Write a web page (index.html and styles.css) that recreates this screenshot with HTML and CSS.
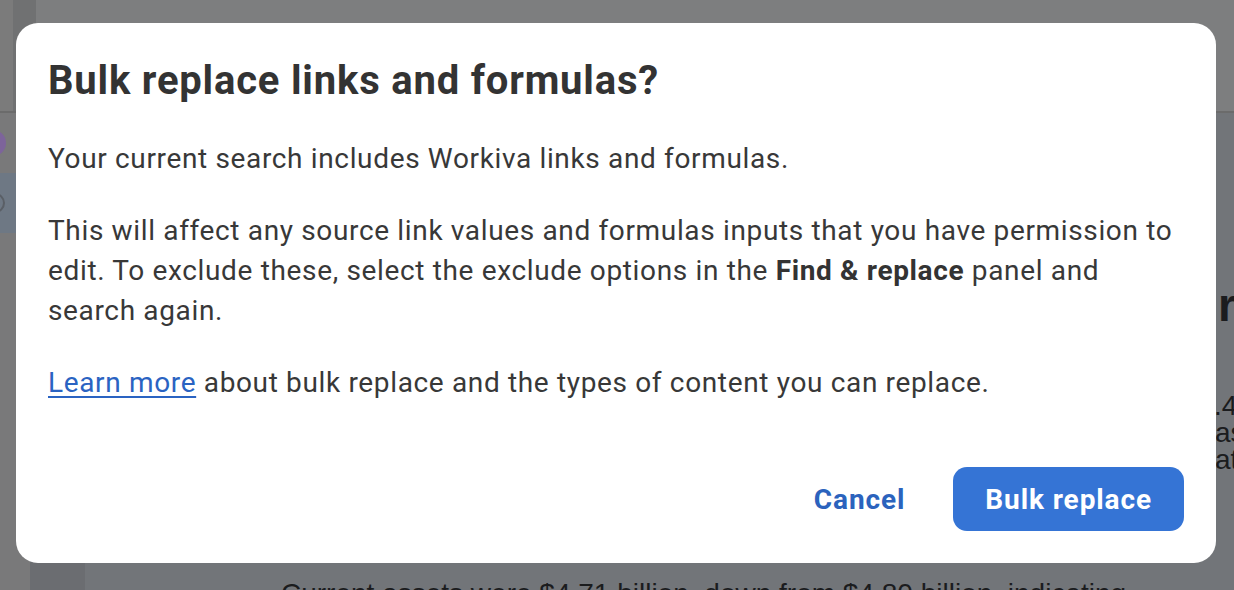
FILE: index.html
```html
<!DOCTYPE html>
<html lang="en">
<head>
<meta charset="utf-8">
<title>Bulk replace links and formulas?</title>
<link rel="stylesheet" href="styles.css">
</head>
<body>
<div class="app">
  <header class="toolbar">
    <div class="toolbar-edge"></div>
    <div class="toolbar-rail"></div>
    <div class="toolbar-main"></div>
  </header>
  <div class="workspace">
    <aside class="sidebar">
      <div class="avatar-row"><span class="avatar"></span></div>
      <div class="nav-item"><span class="ring"></span></div>
    </aside>
    <div class="panel"></div>
    <main class="canvas">
      <div class="doc">
        <h2 class="doc-row doc-heading"><span class="lead">Financial overview of quarterly</span><span class="tail">results</span></h2>
        <div class="doc-lines">
          <p class="doc-row doc-line"><span class="lead">Total revenue for the period increased to $1</span><span class="tail">.45 billion</span></p>
          <p class="doc-row doc-line"><span class="lead">driven by subscription growth and services</span><span class="tail">as customers</span></p>
          <p class="doc-row doc-line"><span class="lead">expanded usage across the platform</span><span class="tail">at scale</span></p>
        </div>
        <p class="doc-para">Current assets were $4.71 billion, down from $4.80 billion, indicating</p>
      </div>
    </main>
  </div>
</div>

<div class="overlay">
  <section class="modal" role="dialog" aria-labelledby="dlg-title">
    <h1 class="modal-title" id="dlg-title">Bulk replace links and formulas?</h1>
    <p class="modal-text">Your current search includes Workiva links and formulas.</p>
    <p class="modal-text">This will affect any source link values and formulas inputs that you have permission to edit. To exclude these, select the exclude options in the <strong>Find &amp; replace</strong> panel and search again.</p>
    <p class="modal-text"><a class="link" href="#">Learn more</a> about bulk replace and the types of content you can replace.</p>
    <div class="modal-actions">
      <button class="btn btn-text" type="button">Cancel</button>
      <button class="btn btn-primary" type="button">Bulk replace</button>
    </div>
  </section>
</div>
</body>
</html>
```
FILE: styles.css
```css
* { box-sizing: border-box; }

html, body {
  margin: 0;
  padding: 0;
  width: 1234px;
  height: 590px;
  overflow: hidden;
}

body {
  font-family: "Roboto", "Liberation Sans", sans-serif;
  background: #7e7f7f;
  position: relative;
}

/* ---------- background application (dimmed) ---------- */
.app {
  display: flex;
  flex-direction: column;
  height: 590px;
}

.toolbar {
  display: flex;
  height: 113px;
  flex: none;
  border-bottom: 2px solid #6b6b6b;
}
.toolbar-edge { width: 13px; background: #7b7b7b; }
.toolbar-rail { width: 23px; background: #707172; }
.toolbar-main { flex: 1; background: #7d7e7f; }

.workspace {
  flex: 1;
  display: flex;
  min-height: 0;
}

.sidebar {
  width: 30px;
  flex: none;
  background: #79797a;
  display: flex;
  flex-direction: column;
  padding-top: 17px;
}
.avatar-row {
  height: 26px;
  overflow: hidden;
}
.avatar {
  display: block;
  width: 26px;
  height: 26px;
  margin-left: -20px;
  border-radius: 50%;
  background: #7d649b;
}
.nav-item {
  margin-top: 17px;
  height: 60px;
  background: #6e7884;
  overflow: hidden;
  display: flex;
  align-items: center;
}
.ring {
  display: block;
  width: 20px;
  height: 20px;
  margin-left: -15px;
  border: 2px solid #5a5f66;
  border-radius: 50%;
}

.panel {
  width: 55px;
  flex: none;
  background: #6b6d71;
}

.canvas {
  flex: 1;
  background: #727579;
  overflow: hidden;
  min-width: 0;
}

.doc {
  margin-left: 196px;
  padding-top: 166px;
  font-family: "Liberation Sans", Arial, sans-serif;
  color: #1b1c1e;
}

/* a document line whose end runs on past the window edge */
.doc-row {
  display: grid;
  grid-template-columns: 933px max-content;
  white-space: nowrap;
}
.doc-row .lead {
  text-align: right;
  padding-right: 0.28em;
  overflow: hidden;
}

.doc-heading {
  margin: 0;
  grid-template-columns: 937px max-content;
  font-size: 46px;
  line-height: 52px;
  font-weight: 700;
}
.doc-lines {
  margin-top: 61px;
}
.doc-line {
  margin: 0;
  font-size: 28px;
  line-height: 27px;
}
.doc-line + .doc-line {
  grid-template-columns: 934px max-content;
}
.doc-para {
  margin: 105px 0 0;
  font-size: 28px;
  line-height: 32px;
  white-space: nowrap;
}

/* ---------- modal ---------- */
.overlay {
  position: absolute;
  inset: 0;
  padding: 23px 18px 27px 16px;
  display: flex;
}

.modal {
  flex: 1;
  background: #ffffff;
  border-radius: 22px;
  padding: 32px;
  display: flex;
  flex-direction: column;
  color: #383838;
  font-family: "Roboto", "Liberation Sans", sans-serif;
}

.modal-title {
  margin: 0;
  font-size: 40px;
  line-height: 52px;
  font-weight: 700;
  color: #333333;
  letter-spacing: 0.8px;
}

.modal-text {
  margin: 32px 0 0;
  font-size: 28px;
  line-height: 40px;
  font-weight: 400;
  letter-spacing: 0.65px;
}
.modal-text strong { font-weight: 700; color: #333333; }

.link {
  color: #2a63c2;
  text-decoration: underline;
  text-underline-offset: 4px;
  text-decoration-thickness: 2px;
}

.modal-actions {
  margin-top: auto;
  display: flex;
  justify-content: flex-end;
  gap: 16px;
}

.btn {
  font-family: inherit;
  font-size: 28px;
  font-weight: 700;
  letter-spacing: 0.9px;
  height: 64px;
  padding: 0 32px;
  border-radius: 14px;
  border: 0;
  cursor: pointer;
}
.btn-text {
  background: transparent;
  color: #2b63bd;
}
.btn-primary {
  background: #3574d5;
  color: #ffffff;
}
```
